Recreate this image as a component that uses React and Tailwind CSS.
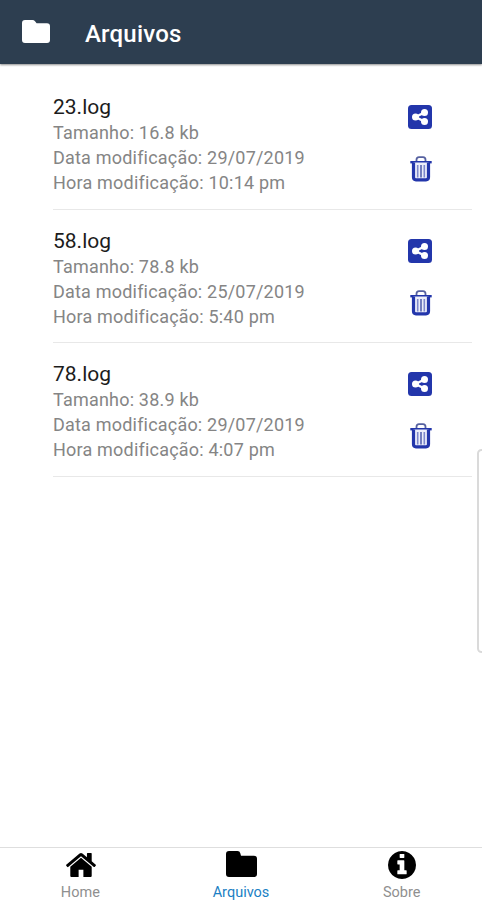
import { useState } from 'react';

const files = [
  { name: '23.log', size: '16.8 kb', date: '29/07/2019', time: '10:14 pm' },
  { name: '58.log', size: '78.8 kb', date: '25/07/2019', time: '5:40 pm' },
  { name: '78.log', size: '38.9 kb', date: '29/07/2019', time: '4:07 pm' },
];

const HeaderFolderIcon = ({ className }) => (
  <svg viewBox="0 0 28 23" fill="currentColor" className={className}>
    <path d="M3 0H10.5Q12 0 13 1.2L14.6 3.2H25Q28 3.2 28 6.2V20Q28 23 25 23H3Q0 23 0 20V3Q0 0 3 0z" />
  </svg>
);

const FolderIcon = ({ className }) => (
  <svg viewBox="0 0 31 26" fill="currentColor" className={className}>
    <path d="M3 0H11.5Q13.8 0 14.3 2.2L15 4.8H28Q31 4.8 31 7.8V23Q31 26 28 26H3Q0 26 0 23V3Q0 0 3 0z" />
  </svg>
);

const HomeIcon = ({ className }) => (
  <svg viewBox="89 253 1614 1283" preserveAspectRatio="none" fill="currentColor" className={className}>
    <path d="M1472 992v480q0 26-19 45t-45 19h-384v-384h-256v384h-384q-26 0-45-19t-19-45v-480q0-1 .5-3t.5-3l575-474 575 474q1 2 1 6zm223-69l-62 74q-8 9-21 11h-3q-13 0-21-7l-692-577-692 577q-12 8-24 7-13-2-21-11l-62-74q-8-10-7-23.5t11-21.5l719-599q32-26 76-26t76 26l244 204v-195q0-14 9-23t23-9h192q14 0 23 9t9 23v408l219 182q10 8 11 21.5t-7 23.5z" />
  </svg>
);

const InfoIcon = ({ className }) => (
  <svg viewBox="128 128 1536 1536" fill="currentColor" className={className}>
    <path d="M1152 1376v-160q0-14-9-23t-23-9h-96v-512q0-14-9-23t-23-9h-320q-14 0-23 9t-9 23v160q0 14 9 23t23 9h96v320h-96q-14 0-23 9t-9 23v160q0 14 9 23t23 9h448q14 0 23-9t9-23zm-128-896v-160q0-14-9-23t-23-9h-192q-14 0-23 9t-9 23v160q0 14 9 23t23 9h192q14 0 23-9t9-23zm640 416q0 209-103 385.5t-279.5 279.5-385.5 103-385.5-103-279.5-279.5-103-385.5 103-385.5 279.5-279.5 385.5-103 385.5 103 279.5 279.5 103 385.5z" />
  </svg>
);

const ShareIcon = ({ className }) => (
  <svg viewBox="0 0 24 24" className={className}>
    <rect width="24" height="24" rx="3.5" fill="currentColor" />
    <path d="M16.5 7.5L7.5 12l9 4.5" fill="none" stroke="white" strokeWidth="2.4" />
    <circle cx="16.5" cy="7.5" r="3.5" fill="white" />
    <circle cx="7.5" cy="12" r="3.5" fill="white" />
    <circle cx="16.5" cy="16.5" r="3.5" fill="white" />
  </svg>
);

const TrashIcon = ({ className }) => (
  <svg viewBox="0 0 22 26" fill="none" className={className}>
    <path d="M6.5 5.5V3.8Q6.5 1.2 9 1.2h4Q15.5 1.2 15.5 3.8V5.5" stroke="#5661a0" strokeWidth="1.8" />
    <path d="M0.3 6.2H21.7" stroke="currentColor" strokeWidth="2.4" />
    <path d="M3.5 6.5V21.3Q3.5 23.8 6 23.8H16Q18.5 23.8 18.5 21.3V6.5" fill="#eceefa" stroke="currentColor" strokeWidth="3.2" />
    <path d="M7.7 9V21.5M14.3 9V21.5" stroke="#7d88cb" strokeWidth="1.6" />
    <path d="M11 9V21.5" stroke="#6672b8" strokeWidth="1.8" />
  </svg>
);

const tabs = [
  { id: 'home', label: 'Home', icon: <HomeIcon className="w-[30px] h-6 mt-[5px] ml-px" /> },
  { id: 'files', label: 'Arquivos', icon: <FolderIcon className="w-[31px] h-[26px] mt-[3px] ml-px" /> },
  { id: 'about', label: 'Sobre', icon: <InfoIcon className="w-7 h-7 mt-[3px]" /> },
];

function FileRow({ file }) {
  return (
    <li className="flex justify-between h-[133.6px] border-b border-[#e8e8e8] pt-[18px]">
      <div className="text-[18px] leading-[25px] tracking-[0.2px] text-[#858585]">
        <h2 className="text-[21px] leading-[26px] tracking-normal text-[#1c1c1c]">{file.name}</h2>
        <p>Tamanho: {file.size}</p>
        <p>Data modificação: {file.date}</p>
        <p>Hora modificação: {file.time}</p>
      </div>
      <div className="flex flex-col items-center pt-[11px] gap-[27px] mr-10 text-[#2336ab]">
        <button><ShareIcon className="w-6 h-6" /></button>
        <button><TrashIcon className="w-[22px] h-[26px] ml-px" /></button>
      </div>
    </li>
  );
}

export default function App() {
  const [active, setActive] = useState('files');

  return (
    <div className="relative flex flex-col h-screen bg-white overflow-hidden font-[Roboto,sans-serif]">
      <header className="flex items-center h-16 shrink-0 pl-[22px] bg-[#2d3e50] text-white shadow-[0_1px_2px_rgba(0,0,0,0.45)]">
        <HeaderFolderIcon className="w-7 h-[23px] mb-0.5" />
        <h1 className="ml-[35px] mt-[3px] text-2xl tracking-[0.2px] font-medium">Arquivos</h1>
      </header>

      <ul className="flex-1 pt-[12px] pl-[53px] pr-[10px]">
        {files.map((file) => (
          <FileRow key={file.name} file={file} />
        ))}
      </ul>

      {/* Edge panel handle */}
      <div className="absolute top-[449px] -right-1 w-[9px] h-[204px] rounded-lg border-2 border-[#dadada] bg-white" />

      <nav className="grid grid-cols-3 h-[53px] shrink-0 border-t border-[#dedede]">
        {tabs.map((tab) => (
          <button key={tab.id} onClick={() => setActive(tab.id)} className="flex flex-col items-center text-black">
            <span className="h-[38px]">{tab.icon}</span>
            <span className={tab.id === active ? 'text-[14.5px] leading-[14px] text-[#1b7fc4]' : 'text-[14.5px] leading-[14px] text-[#8f8f8f]'}>
              {tab.label}
            </span>
          </button>
        ))}
      </nav>
    </div>
  );
}
